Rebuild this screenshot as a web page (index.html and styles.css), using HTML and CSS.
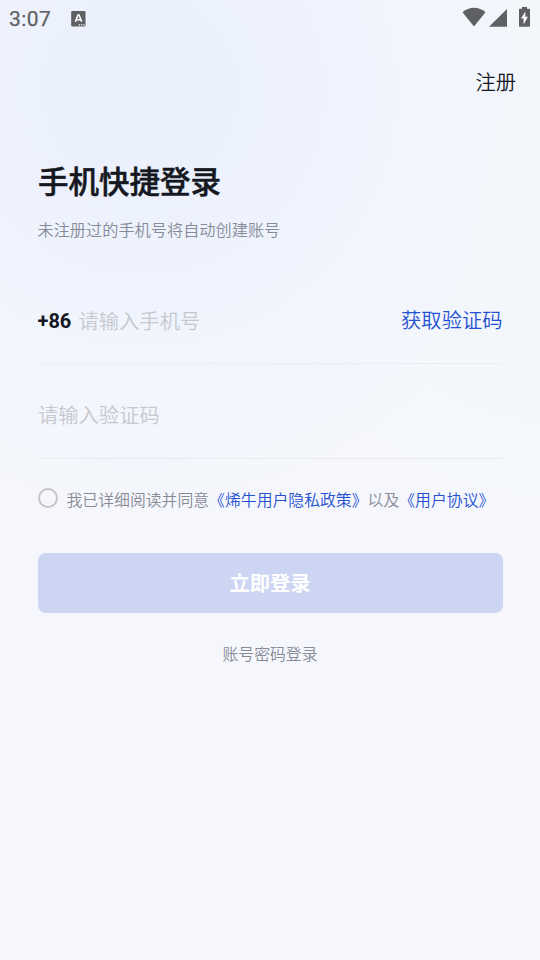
FILE: index.html
```html
<!DOCTYPE html>
<html lang="zh-CN">
<head>
<meta charset="utf-8">
<title>手机快捷登录</title>
<link rel="stylesheet" href="styles.css">
</head>
<body>
<div class="screen">
  <header class="status">
    <span class="time">3:07</span>
    <svg class="keyboard" width="15" height="16" viewBox="0 0 15 16"><rect x=".2" width="14.300" height="15.500" rx="1.3" fill="#5f6063"/><path d="M4.300 10.800 7 4h1l2.700 6.800M5.500 8.800h4" fill="none" stroke="#fff" stroke-width="1.6"/><path d="M7.800 13.800h1.300m1 0h1.300m1 0h1.300" stroke="#fff" stroke-width="1.2"/></svg>
    <svg class="signals" width="70" height="22" viewBox="0 0 70 22"><g fill="#5f6063"><path d="M.5 6.300C7 .3 17.200.3 23.500 6.300L12 20.500z"/><path d="M27 20.700 45 3v17.700z"/><path d="M60 1h5v1.800h2.200q.8 0 .8.800v16.300q0 .8-.8.800h-9.400q-.8 0-.8-.8V3.600q0-.8.800-.8H60z"/></g><path d="m63.300 5.500-4.200 7h2.500V18.500l4.300-7.700h-2.600z" fill="#fff"/></svg>
  </header>
  <nav class="top"><a class="register">注册</a></nav>
  <main class="login">
    <h1 class="title">手机快捷登录</h1>
    <p class="subtitle">未注册过的手机号将自动创建账号</p>
    <div class="field phone"><span class="prefix">+86</span><span class="placeholder">请输入手机号</span><a class="code">获取验证码</a></div>
    <div class="field verify"><span class="placeholder">请输入验证码</span></div>
    <div class="agreement"><span class="radio"></span><p class="terms">我已详细阅读并同意<a>《烯牛用户隐私政策》</a>以及<a>《用户协议》</a></p></div>
    <button class="submit">立即登录</button>
    <a class="password">账号密码登录</a>
  </main>
</div>
</body>
</html>
```
FILE: styles.css
```css
* { box-sizing: border-box; }
body { margin: 0; font-family: Roboto, "Noto Sans CJK SC", sans-serif; font-weight: 350; }
h1, p { margin: 0; }
.screen {
  width: 540px;
  height: 960px;
  overflow: hidden;
  background:
    radial-gradient(circle at 140px 90px, #eaf0fc 0, #edf2fd 150px, rgba(241, 245, 254, .95) 260px, rgba(243, 247, 254, 0) 410px),
    radial-gradient(circle at 560px 190px, #f2f7fa 0, #f3f7fb 160px, rgba(245, 247, 252, 0) 310px),
    #f5f7fc;
}
.status { height: 36px; padding: 0 8px 0 9px; display: flex; align-items: center; color: #5f6063; }
.time { font-size: 21px; font-weight: 400; -webkit-text-stroke: .25px; line-height: 36px; letter-spacing: .4px; padding-top: 2px; width: 62px; }
.keyboard { margin-top: 1px; }
.signals { margin-left: auto; margin-top: -2px; }
.top { height: 93px; display: flex; justify-content: flex-end; align-items: center; padding: 1px 24px 0 0; }
.register { font-size: 20.3px; line-height: 30px; color: #15181f; }
.login { display: flex; flex-direction: column; padding: 32px 37.5px 0; }
.title { font-size: 30.500px; line-height: 44px; font-weight: 500; -webkit-text-stroke: .5px; color: #15181f; padding-left: .5px; }
.subtitle { font-size: 16.200px; line-height: 24px; margin-top: 14px; color: #878b98; }
.field { display: flex; align-items: center; border-bottom: 1px solid #e8eaf0; }
.phone { height: 88px; margin-top: 33px; padding-top: 2px; border-color: #eaedf3; }
.verify { height: 95px; padding: 9px 0 0 .5px; }
.prefix { font-size: 20px; font-weight: 700; width: 41px; color: #15181f; }
.placeholder { font-size: 20.300px; line-height: 30px; color: #c6c8ce; }
.phone .placeholder { padding-top: 2px; }
.code { margin-left: auto; font-size: 20.300px; line-height: 30px; color: #2450d2; }
.agreement { height: 80px; display: flex; align-items: center; }
.radio { width: 20.500px; height: 20.500px; border: 2px solid #c4c5c9; border-radius: 50%; margin: -2px 8.500px 0 0; }
.terms { font-size: 15.850px; line-height: 24px; padding-top: 4px; color: #878b98; white-space: nowrap; }
.terms a { color: #2450d2; }
.submit { height: 60px; margin-top: 14px; padding: 2px 0 0; border: 0; border-radius: 8px; background: #ccd5f2; color: #fff; font: 700 20.300px/58px Roboto, "Noto Sans CJK SC", sans-serif; }
.password { align-self: center; margin-top: 30px; font-size: 15.850px; line-height: 24px; color: #878b98; }
```
